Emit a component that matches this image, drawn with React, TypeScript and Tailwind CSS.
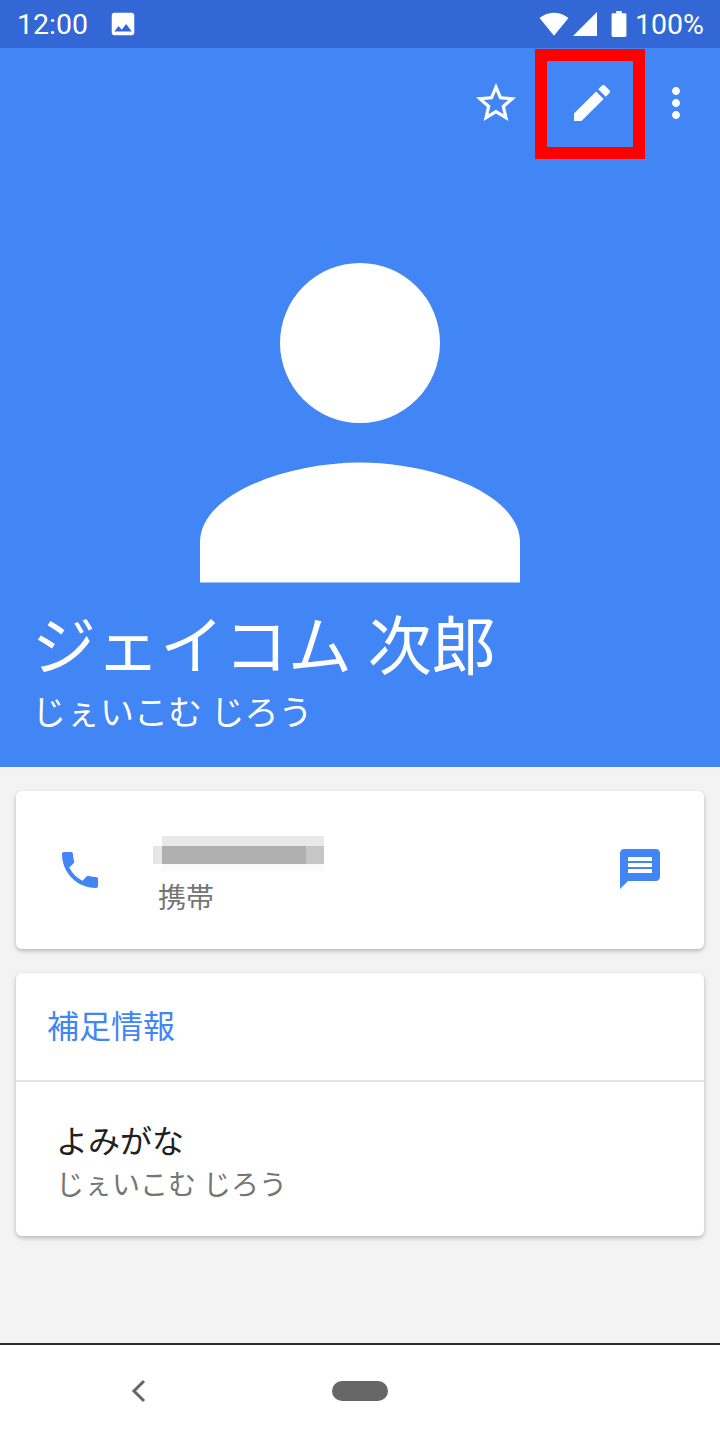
const cjk = "font-['Roboto','Noto_Sans_CJK_JP',sans-serif]";

function Phone() {
  return (
    <svg viewBox="0 0 24 24" className="w-12 h-12" fill="#4285f4">
      <path d="M6.62 10.79c1.44 2.83 3.76 5.14 6.59 6.59l2.2-2.2c.27-.27.67-.36 1.02-.24 1.12.37 2.33.57 3.57.57.55 0 1 .45 1 1V20c0 .55-.45 1-1 1-9.39 0-17-7.61-17-17 0-.55.45-1 1-1h3.5c.55 0 1 .45 1 1 0 1.25.2 2.45.57 3.57.11.35.03.74-.25 1.02l-2.2 2.2z" />
    </svg>
  );
}

function Message() {
  return (
    <svg viewBox="0 0 24 24" className="w-12 h-12 mt-[-2px]" fill="#4285f4">
      <path d="M20 2H4c-1.1 0-2 .9-2 2v18l4-4h14c1.1 0 2-.9 2-2V4c0-1.1-.9-2-2-2zM18 14H6v-2h12v2zm0-3H6V9h12v2zm0-3H6V6h12v2z" />
    </svg>
  );
}

export default function App() {
  return (
    <div className={`w-[720px] h-[1440px] flex flex-col bg-[#f3f3f3] ${cjk} overflow-hidden`}>
      <div className="h-12 shrink-0 bg-[#3367d6] flex items-center justify-between pl-[17px] pr-[16px] text-white text-[28.5px] leading-none">
        <div className="flex items-center gap-[20px]">
          <span className="pt-[2px]">12:00</span>
          <svg viewBox="0 0 24 24" className="w-[30px] h-[30px]" fill="#fff">
            <path d="M21 19V5c0-1.1-.9-2-2-2H5c-1.1 0-2 .9-2 2v14c0 1.100.9 2 2 2h14c1.100 0 2-.9 2-2zM8.500 13.500l2.500 3.010L14.500 12l4.500 6H5l3.500-4.500z" />
          </svg>
        </div>
        <div className="flex items-center">
          <svg viewBox="0 0 28 24" className="w-[30px] h-[26px]" fill="#fff">
            <path d="M14 23 0.500 6.500C1.200 5.900 6.300 1.500 14 1.500s12.800 4.400 13.500 5L14 23z" />
          </svg>
          <svg viewBox="0 0 24 24" className="w-[24px] h-[24px] ml-[4px]" fill="#fff">
            <path d="M0 24 24 0v24z" />
          </svg>
          <svg viewBox="0 0 16 28" className="w-[16px] h-[26px] ml-[14px]" fill="#fff">
            <path d="M5 0h6v2.500h3.500a1.500 1.500 0 0 1 1.500 1.500v22.500a1.500 1.500 0 0 1-1.500 1.500h-13A1.500 1.500 0 0 1 0 26.500V4a1.500 1.500 0 0 1 1.500-1.500H5z" />
          </svg>
          <span className="ml-[8px] pt-[2px]">100%</span>
        </div>
      </div>

      <div className="relative h-[719px] shrink-0 bg-[#4285f4] flex flex-col">
        <div className="h-[111px] flex items-center justify-end pr-[20px] pb-[2px]">
          <svg viewBox="0 0 24 24" className="w-12 h-12" fill="#fff">
            <path d="M22 9.240l-7.190-.620L12 2 9.190 8.630 2 9.240l5.460 4.730L5.820 21 12 17.270 18.180 21l-1.630-7.030L22 9.240zM12 15.400l-3.760 2.270 1-4.280-3.320-2.880 4.380-.380L12 6.100l1.710 4.040 4.380.380-3.320 2.880 1 4.280L12 15.400z" />
          </svg>
          <svg viewBox="0 0 24 24" className="w-12 h-12 ml-[48px]" fill="#fff">
            <path d="M3 17.250V21h3.750L17.810 9.940l-3.750-3.750L3 17.250zM20.710 7.040c.390-.390.390-1.020 0-1.410l-2.340-2.340c-.390-.390-1.020-.390-1.410 0l-1.830 1.830 3.750 3.750 1.830-1.830z" />
          </svg>
          <svg viewBox="0 0 24 24" className="w-12 h-12 ml-[36px]" fill="#fff">
            <path d="M12 8c1.100 0 2-.9 2-2s-.9-2-2-2-2 .9-2 2 .9 2 2 2zm0 2c-1.100 0-2 .9-2 2s.9 2 2 2 2-.9 2-2-.9-2-2-2zm0 6c-1.100 0-2 .9-2 2s.9 2 2 2 2-.9 2-2-.9-2-2-2z" />
          </svg>
        </div>
        <div className="absolute left-[535px] top-[1px] w-[110px] h-[110px] border-[12px] border-[#ff0000]" />

        <div className="flex justify-center mt-[104px]">
          <svg viewBox="0 0 320 320" className="w-[320px] h-[320px]" fill="#fff">
            <circle cx="160" cy="80" r="80" />
            <path d="M0 319.500v-40c0-50 90-80 160-80s160 30 160 80v40z" />
          </svg>
        </div>

        <div className="pl-[32px] mt-[25px] text-white">
          <div className="text-[64px] leading-[80px]">ジェイコム 次郎</div>
          <div className="text-[34px] leading-[44px] mt-[3px]">じぇいこむ じろう</div>
        </div>
      </div>

      <div className="flex-1 px-4 pt-6 flex flex-col gap-6">
        <div className="h-[158px] bg-white rounded-[6px] shadow-[0_2px_4px_rgba(0,0,0,0.25)] flex items-center pl-[40px] pr-[40px]">
          <Phone />
          <div className="ml-[54px] flex-1 flex flex-col pt-[13px]">
            <div className="flex flex-col ml-[-5px] w-[171px]">
              <div className="h-[10px] ml-[9px] bg-[#e8e8e8]" />
              <div className="h-[18px] flex">
                <div className="w-[9px] bg-[#e5e5e5]" />
                <div className="w-[144px] bg-[#b0b0b0]" />
                <div className="w-[18px] bg-[#c6c6c6]" />
              </div>
              <div className="h-[7px] ml-[9px] bg-[#fafafa]" />
            </div>
            <div className="text-[28px] leading-[36px] text-[#757575] mt-[10px]">携帯</div>
          </div>
          <Message />
        </div>

        <div className="h-[263px] bg-white rounded-[6px] shadow-[0_2px_4px_rgba(0,0,0,0.25)] flex flex-col">
          <div className="h-[107px] flex items-center pl-[31px] text-[32px] text-[#4285f4] border-b-2 border-[#e3e3e3] box-content">補足情報</div>
          <div className="pl-[40px] pt-[38px]">
            <div className="text-[32px] leading-[44px] text-[#212121]">よみがな</div>
            <div className="text-[28px] leading-[40px] text-[#757575] mt-[2px]">じぇいこむ じろう</div>
          </div>
        </div>
      </div>

      <div className="h-[97px] shrink-0 bg-white border-t-2 border-[#2b2b2b] flex items-center relative pb-[4px]">
        <svg viewBox="0 0 16 24" className="w-[16px] h-[24px] ml-[131px]" fill="none" stroke="#666" strokeWidth="3">
          <path d="M13 2 3 12l10 10" />
        </svg>
        <div className="w-[56px] h-[20px] ml-[185px] rounded-full bg-[#666]" />
      </div>
    </div>
  );
}
